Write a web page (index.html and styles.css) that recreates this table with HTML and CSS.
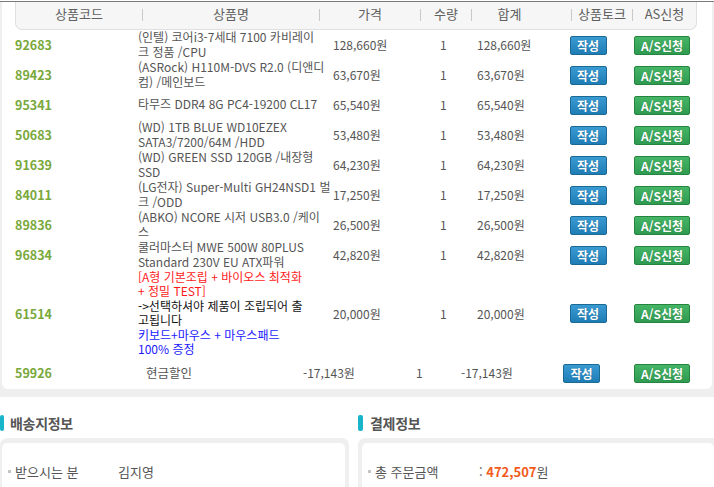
FILE: index.html
```html
<!DOCTYPE html>
<html lang="ko">
<head>
<meta charset="utf-8">
<title>주문상세</title>
<link rel="stylesheet" href="styles.css">
</head>
<body>
<div class="order">
  <div class="order-inner">
    <div class="thead">
      <div class="th th-code">상품코드</div><span class="sep"></span>
      <div class="th th-name">상품명</div><span class="sep"></span>
      <div class="th th-price">가격</div><span class="sep"></span>
      <div class="th th-qty">수량</div><span class="sep"></span>
      <div class="th th-total">합계</div><span class="sep"></span>
      <div class="th th-talk">상품토크</div><span class="sep"></span>
      <div class="th th-as">AS신청</div>
    </div>

    <div class="row">
      <div class="code">92683</div>
      <div class="name">(인텔) 코어i3-7세대 7100 카비레이<br>크 정품 /CPU</div>
      <div class="price">128,660원</div>
      <div class="qty">1</div>
      <div class="total">128,660원</div>
      <div class="cell-btn"><button class="btn btn-talk">작성</button></div>
      <div class="cell-btn"><button class="btn btn-as">A/S신청</button></div>
    </div>
    <div class="row">
      <div class="code">89423</div>
      <div class="name">(ASRock) H110M-DVS R2.0 (디앤디<br>컴) /메인보드</div>
      <div class="price">63,670원</div>
      <div class="qty">1</div>
      <div class="total">63,670원</div>
      <div class="cell-btn"><button class="btn btn-talk">작성</button></div>
      <div class="cell-btn"><button class="btn btn-as">A/S신청</button></div>
    </div>
    <div class="row">
      <div class="code">95341</div>
      <div class="name">타무즈 DDR4 8G PC4-19200 CL17</div>
      <div class="price">65,540원</div>
      <div class="qty">1</div>
      <div class="total">65,540원</div>
      <div class="cell-btn"><button class="btn btn-talk">작성</button></div>
      <div class="cell-btn"><button class="btn btn-as">A/S신청</button></div>
    </div>
    <div class="row">
      <div class="code">50683</div>
      <div class="name">(WD) 1TB BLUE WD10EZEX<br>SATA3/7200/64M /HDD</div>
      <div class="price">53,480원</div>
      <div class="qty">1</div>
      <div class="total">53,480원</div>
      <div class="cell-btn"><button class="btn btn-talk">작성</button></div>
      <div class="cell-btn"><button class="btn btn-as">A/S신청</button></div>
    </div>
    <div class="row">
      <div class="code">91639</div>
      <div class="name">(WD) GREEN SSD 120GB /내장형<br>SSD</div>
      <div class="price">64,230원</div>
      <div class="qty">1</div>
      <div class="total">64,230원</div>
      <div class="cell-btn"><button class="btn btn-talk">작성</button></div>
      <div class="cell-btn"><button class="btn btn-as">A/S신청</button></div>
    </div>
    <div class="row">
      <div class="code">84011</div>
      <div class="name">(LG전자) Super-Multi GH24NSD1 벌<br>크 /ODD</div>
      <div class="price">17,250원</div>
      <div class="qty">1</div>
      <div class="total">17,250원</div>
      <div class="cell-btn"><button class="btn btn-talk">작성</button></div>
      <div class="cell-btn"><button class="btn btn-as">A/S신청</button></div>
    </div>
    <div class="row">
      <div class="code">89836</div>
      <div class="name">(ABKO) NCORE 시저 USB3.0 /케이<br>스</div>
      <div class="price">26,500원</div>
      <div class="qty">1</div>
      <div class="total">26,500원</div>
      <div class="cell-btn"><button class="btn btn-talk">작성</button></div>
      <div class="cell-btn"><button class="btn btn-as">A/S신청</button></div>
    </div>
    <div class="row">
      <div class="code">96834</div>
      <div class="name">쿨러마스터 MWE 500W 80PLUS<br>Standard 230V EU ATX파워</div>
      <div class="price">42,820원</div>
      <div class="qty">1</div>
      <div class="total">42,820원</div>
      <div class="cell-btn"><button class="btn btn-talk">작성</button></div>
      <div class="cell-btn"><button class="btn btn-as">A/S신청</button></div>
    </div>
    <div class="row">
      <div class="code">61514</div>
      <div class="name"><span class="opt-red">[A형 기본조립 + 바이오스 최적화<br>+ 정밀 TEST]</span><br><span class="opt-black">-&gt;선택하셔야 제품이 조립되어 출<br>고됩니다</span><br><span class="opt-blue">키보드+마우스 + 마우스패드<br>100% 증정</span></div>
      <div class="price">20,000원</div>
      <div class="qty">1</div>
      <div class="total">20,000원</div>
      <div class="cell-btn"><button class="btn btn-talk">작성</button></div>
      <div class="cell-btn"><button class="btn btn-as">A/S신청</button></div>
    </div>
    <div class="row row-discount">
      <div class="code">59926</div>
      <div class="name">현금할인</div>
      <div class="price">-17,143원</div>
      <div class="qty">1</div>
      <div class="total">-17,143원</div>
      <div class="cell-btn"><button class="btn btn-talk">작성</button></div>
      <div class="cell-btn"><button class="btn btn-as">A/S신청</button></div>
    </div>
  </div>
</div>

<div class="info">
  <section class="info-col">
    <h2 class="info-title"><span class="bar"></span>배송지정보</h2>
    <div class="info-box">
      <div class="info-inner">
        <div class="info-row">
          <span class="bullet"></span><span class="label">받으시는 분</span><span class="value">김지영</span>
        </div>
      </div>
    </div>
  </section>
  <section class="info-col info-col-right">
    <h2 class="info-title"><span class="bar"></span>결제정보</h2>
    <div class="info-box">
      <div class="info-inner">
        <div class="info-row">
          <span class="bullet"></span><span class="label">총 주문금액</span><span class="value">: <strong class="amount">472,507</strong>원</span>
        </div>
      </div>
    </div>
  </section>
</div>
</body>
</html>
```

FILE: styles.css
```css
* { box-sizing: border-box; }

body {
  margin: 0;
  background: #fff;
  font-family: "Noto Sans CJK KR", "Liberation Sans", sans-serif;
  font-size: 12px;
  color: #555;
  overflow: hidden;
}

/* ---------- order table ---------- */
.order {
  margin-top: 1px;
  border-top: 1px solid #7a7a7a;
  background: #efefef;
  padding: 0 2px 8px 2px;
}

.order-inner {
  background: #fff;
  border-radius: 0 0 6px 6px;
}

.thead {
  display: flex;
  align-items: flex-start;
  margin-left: 13px;
  width: 682px;
  height: 28px;
  background: #f6f6f6;
  border: 1px solid #e0e0e0;
  border-top: none;
  border-radius: 0 0 7px 7px;
  font-size: 13px;
  color: #606060;
}

.th {
  text-align: center;
  line-height: 16px;
  padding-top: 4px;
}
.th-code { width: 126px; }
.th-name { width: 176px; }
.th-price { width: 100px; }
.th-qty { width: 50px; }
.th-total { width: 99px; padding-right: 24px; }
.th-talk { width: 60px; }
.th-as { flex: 1; }

.sep {
  width: 1px;
  height: 12px;
  margin-top: 7px;
  background: #c9c9c9;
}

.row {
  display: grid;
  grid-template-columns: 123px 195px 107px 37px 76px 70px 78px;
  align-items: center;
  min-height: 30px;
  padding-left: 13px;
  line-height: 14.4px;
}

.row-discount {
  grid-template-columns: 131px 157px 113px 45px 87px 67px 94px;
  min-height: 32px;
  color: #666;
}

.code {
  font-weight: bold;
  color: #79a83b;
  font-size: 12.5px;
}

.name {
  white-space: nowrap;
  color: #555;
  padding-bottom: 1px;
}

.row-discount .name { font-size: 12.5px; }

.price, .qty, .total {
  color: #555;
}

.opt-red { color: #ff1a1a; }
.opt-black { color: #111; }
.opt-blue { color: #1a1aff; }

.cell-btn {
  display: flex;
  justify-content: center;
}

.btn {
  font-family: "Noto Sans CJK KR", "Liberation Sans", sans-serif;
  font-size: 12px;
  font-weight: bold;
  color: #fff;
  height: 19px;
  padding: 0;
  line-height: 17px;
  border-radius: 2px;
  cursor: pointer;
  text-shadow: 0 0 1px rgba(0,0,0,0.25);
}

.btn-talk {
  width: 37px;
  background: linear-gradient(#3a9ad2, #1f7db6);
  border: 1px solid #1b6995;
}

.btn-as {
  width: 56px;
  background: linear-gradient(#45b566, #2f9a51);
  border: 1px solid #27843f;
}

/* ---------- info section ---------- */
.info {
  display: grid;
  grid-template-columns: 349px 1fr;
  column-gap: 9px;
  margin-top: 17px;
}

.info-title {
  display: flex;
  align-items: center;
  gap: 6px;
  margin: 0;
  height: 18px;
  font-size: 14px;
  font-weight: bold;
  color: #555;
  letter-spacing: -0.3px;
}

.bar {
  width: 4px;
  height: 16px;
  border-radius: 2px;
  background: #17b4ca;
}

.info-col-right .bar { width: 5px; }
.info-col-right .info-title { gap: 7px; }

.info-box {
  margin-top: 6px;
  background: #efefef;
  border-radius: 7px 7px 0 0;
  padding: 5px 4px 0 2px;
}

.info-col-right .info-box {
  padding-right: 0;
  padding-left: 4px;
  border-radius: 7px 0 0 0;
}

.info-inner {
  background: #fff;
  border-radius: 5px 5px 0 0;
  height: 60px;
  padding-top: 19px;
}

.info-row {
  display: flex;
  align-items: center;
  height: 18px;
  font-size: 13px;
  color: #555;
}

.bullet {
  width: 3px;
  height: 3px;
  background: #c4c4c4;
  margin-left: 6px;
  margin-right: 4px;
}

.label {
  width: 103px;
}

.info-col-right .label { width: 104px; }

.amount {
  color: #f25a1c;
  font-weight: bold;
}
```
